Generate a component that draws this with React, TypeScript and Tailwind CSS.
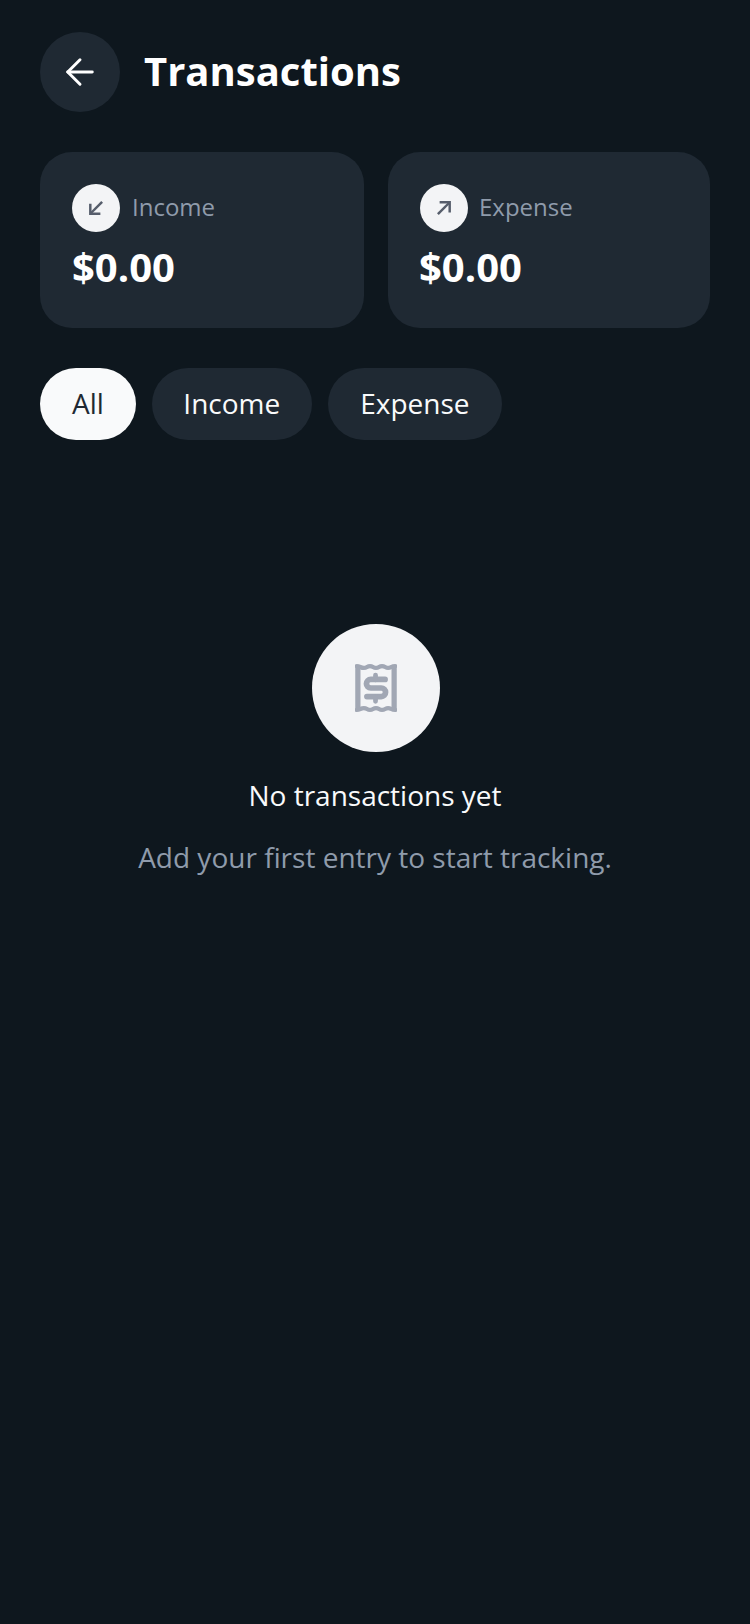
import { ArrowLeft } from "lucide-react";

const ReceiptIcon = () => (
  <svg width="42" height="50" viewBox="0 0 44 52" fill="none" stroke="#a1a7b4" strokeWidth="5.500" strokeLinejoin="round">
    <path d="M3 2.500v47" />
    <path d="M41 2.500v47" />
    <path d="M2 3c3 0 4 2 7.300 2s3.300-2 6.400-2 3.200 2 6.300 2 3.200-2 6.300-2 3.400 2 6.400 2 3.300-2 7.300-2" strokeWidth="4.500" strokeLinecap="round" />
    <path d="M2 49c3 0 4-2 7.300-2s3.300 2 6.400 2 3.200-2 6.300-2 3.200 2 6.300 2 3.400-2 6.400-2 3.300 2 7.300 2" strokeWidth="4.500" strokeLinecap="round" />
    <path d="M31.500 17H16.500a4.500 4.500 0 0 0 0 9h11a4.500 4.500 0 0 1 0 9H12.500" strokeWidth="6" strokeLinecap="round" />
    <path d="M21.500 12.500v5M21.500 35v5" strokeWidth="5" strokeLinecap="round" />
  </svg>
);

// arrow drawn by hand, the tips are square in the picture
const SmallArrow = ({ up }: { up?: boolean }) => (
  <svg width="14" height="14" viewBox="0 0 16 16" fill="none" stroke="#565d6b" strokeWidth="2.800" className={up ? "rotate-180" : ""}>
    <path d="M15 1 2 14" />
    <path d="M1.500 3v11.500H13" />
  </svg>
);

const Stat = ({ label, up, className }: { label: string; up?: boolean; className: string }) => (
  <div className={`h-[176px] rounded-[32px] bg-[#1f2933] py-8 pr-8 ${className}`}>
    <div className={`flex items-center ${up ? "gap-[11px]" : "gap-3"}`}>
      <div className={`flex h-12 w-12 items-center justify-center rounded-full bg-[#f3f4f6] ${up ? "ml-px" : ""}`}>
        <SmallArrow up={up} />
      </div>
      <span className="pb-0.5 text-2xl leading-8 text-[#8f9bab]">{label}</span>
    </div>
    <div className="mt-[11px] text-[40px] leading-[48px] font-bold text-white">$0.00</div>
  </div>
);

export default function App() {
  return (
    <div className="font-['Open_Sans',sans-serif] min-h-[1624px] w-[750px] bg-[#0e171e] px-10 pt-8">
      <header className="flex items-center gap-6">
        <button className="flex h-20 w-20 items-center justify-center rounded-full bg-[#1f2933] text-white">
          <ArrowLeft size={42} strokeWidth={1.7} />
        </button>
        <h1 className="pb-0.5 text-[40px] leading-[48px] font-bold text-white">Transactions</h1>
      </header>

      <section className="mt-10 flex gap-6">
        <Stat label="Income" className="w-[324px] pl-8" />
        <Stat label="Expense" up className="flex-1 pl-[31px]" />
      </section>

      <nav className="mt-10 flex gap-4">
        <button className="h-[72px] rounded-full bg-[#f9fafb] px-8 pb-0.5 text-[28px] text-[#1f2933]">All</button>
        <button className="h-[72px] rounded-full bg-[#1f2933] px-[31.5px] pb-0.5 text-[28px] text-[#f9fafb]">Income</button>
        <button className="h-[72px] rounded-full bg-[#1f2933] px-[32.5px] pb-0.5 text-[28px] text-[#f9fafb]">Expense</button>
      </nav>

      <section className="mt-[184px] flex flex-col items-center">
        <div className="ml-0.5 flex h-32 w-32 items-center justify-center rounded-full bg-[#f3f4f6]">
          <ReceiptIcon />
        </div>
        <p className="mt-[25px] text-[28px] leading-9 text-[#f9fafb]">No transactions yet</p>
        <p className="mt-[26px] text-[28px] leading-9 text-[#8f9bab]">Add your first entry to start tracking.</p>
      </section>
    </div>
  );
}
